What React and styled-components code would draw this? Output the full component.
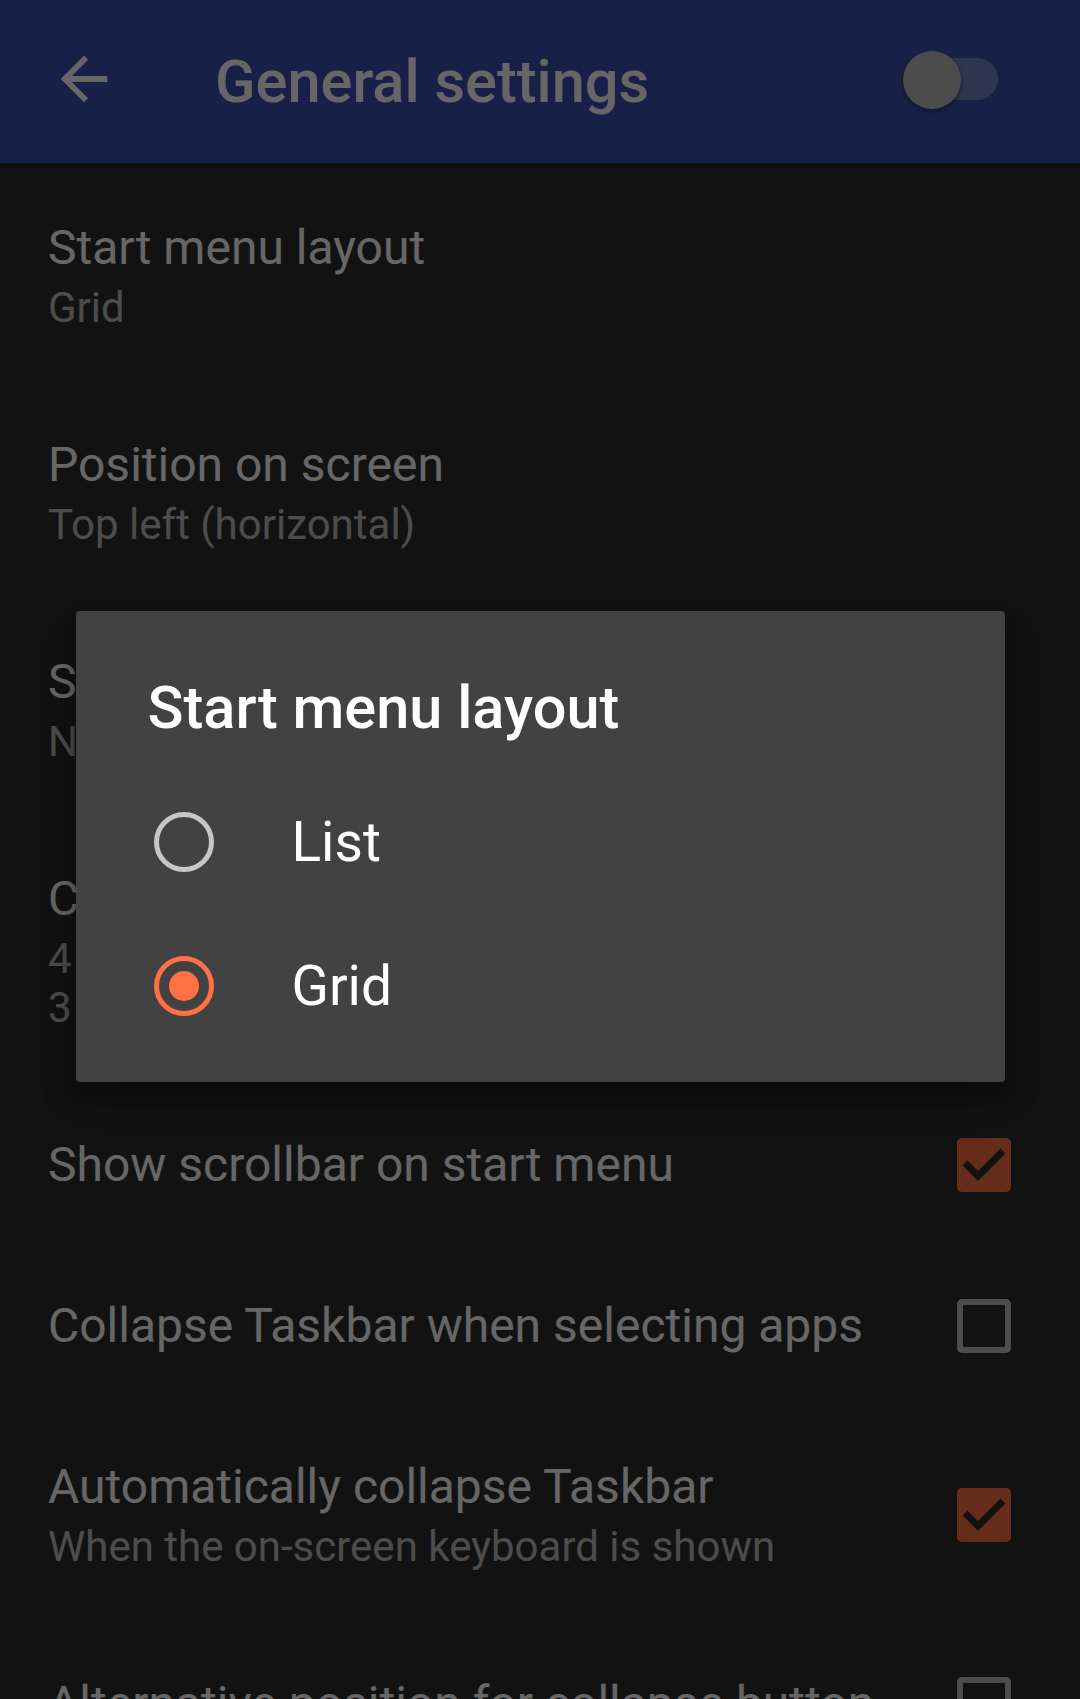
import styled, { createGlobalStyle } from "styled-components";

const GlobalStyle = createGlobalStyle`
  html, body {
    margin: 0;
    padding: 0;
    background: #2f2f2f;
  }
  * {
    box-sizing: border-box;
  }
`;

const Screen = styled.div`
  position: relative;
  height: 100vh;
  overflow: hidden;
  background-color: #2f2f2f;
  font-family: Roboto, "Noto Sans", sans-serif;
  color: #ffffff;
`;

const AppBar = styled.header`
  display: flex;
  align-items: center;
  height: 163px;
  padding: 0 82px 5px 49px;
  background-color: #3f51b5;
  box-shadow: 0 3px 6px rgba(0, 0, 0, 0.25);
`;

const BackButton = styled.div`
  display: flex;
  width: 70px;
  height: 70px;
  color: #ffffff;
`;

const BarTitle = styled.h1`
  flex: 1;
  margin: 0 0 0 96px;
  padding-top: 5px;
  font-size: 59.5px;
  line-height: 70px;
  font-weight: 500;
`;

const Switch = styled.div`
  position: relative;
  display: flex;
  align-items: center;
  justify-content: flex-end;
  width: 95px;
  height: 60px;
`;

const Track = styled.div`
  width: 86px;
  height: 42px;
  border-radius: 21px;
  background-color: rgba(255, 255, 255, 0.3);
`;

const Thumb = styled.div`
  position: absolute;
  left: 0;
  top: 2px;
  width: 58px;
  height: 58px;
  border-radius: 50%;
  background-color: #bdbdbd;
  box-shadow: 0 2px 4px rgba(0, 0, 0, 0.4);
`;

const PrefList = styled.div`
  display: flex;
  flex-direction: column;
`;

const Row = styled.div`
  display: flex;
  align-items: center;
  padding: 57px 69px 48px 48px;
`;

const TextCol = styled.div`
  flex: 1;
  min-width: 0;
`;

const Title = styled.div`
  font-size: 48px;
  line-height: 56px;
  color: #ffffff;
  white-space: nowrap;
`;

const Summary = styled.div`
  margin-top: 7px;
  font-size: 42px;
  line-height: 49px;
  color: rgba(255, 255, 255, 0.7);
`;

const CheckBox = styled.div`
  flex: none;
  display: flex;
  align-items: center;
  justify-content: center;
  width: 54px;
  height: 54px;
  border-radius: 5px;
  margin-left: 30px;
  background-color: ${(p) => (p.checked ? "#ff7043" : "transparent")};
  border: ${(p) => (p.checked ? "none" : "6px solid rgba(255, 255, 255, 0.7)")};
`;

const Scrim = styled.div`
  position: absolute;
  inset: 0;
  display: flex;
  align-items: center;
  justify-content: center;
  padding-bottom: 6px;
  background-color: rgba(0, 0, 0, 0.6);
`;

const Dialog = styled.div`
  width: 929px;
  padding: 63px 0 24px;
  border-radius: 4px;
  background-color: #424242;
  box-shadow: 0 24px 38px rgba(0, 0, 0, 0.14), 0 9px 46px rgba(0, 0, 0, 0.12),
    0 11px 15px rgba(0, 0, 0, 0.2);
`;

const DialogTitle = styled.h2`
  margin: 0 0 28px;
  padding: 0 72px;
  font-size: 59.5px;
  line-height: 68px;
  font-weight: 500;
  color: #ffffff;
`;

const Option = styled.div`
  display: flex;
  align-items: center;
  height: 144px;
  padding-left: 78px;
`;

const Radio = styled.div`
  display: flex;
  align-items: center;
  justify-content: center;
  width: 60px;
  height: 60px;
  border-radius: 50%;
  border: 5.5px solid ${(p) => (p.selected ? "#ff7043" : "#c6c6c6")};

  &::after {
    content: "";
    display: ${(p) => (p.selected ? "block" : "none")};
    width: 30px;
    height: 30px;
    border-radius: 50%;
    background-color: #ff7043;
  }
`;

const OptionLabel = styled.span`
  margin-left: 78px;
  font-size: 55px;
  color: #ffffff;
`;

const prefs = [
  { title: "Start menu layout", summary: ["Grid"] },
  { title: "Position on screen", summary: ["Top left (horizontal)"] },
  { title: "Start menu size", summary: ["Normal"] },
  { title: "Columns and rows", summary: ["4 columns", "3 rows"] },
  { title: "Show scrollbar on start menu", check: true },
  { title: "Collapse Taskbar when selecting apps", check: false },
  {
    title: "Automatically collapse Taskbar",
    summary: ["When the on-screen keyboard is shown"],
    check: true,
  },
  { title: "Alternative position for collapse button", check: false },
];

function ArrowBack() {
  return (
    <svg viewBox="0 0 24 24" width="70" height="70" fill="currentColor">
      <path d="M20 11H7.83l5.59-5.59L12 4l-8 8 8 8 1.41-1.41L7.83 13H20v-2z" />
    </svg>
  );
}

function Check() {
  return (
    <svg width="54" height="54" viewBox="0 0 54 54">
      <path
        d="M8 25 L21 38 L46 13"
        fill="none"
        stroke="#2f2f2f"
        strokeWidth="7"
      />
    </svg>
  );
}

export default function App() {
  return (
    <>
      <GlobalStyle />
      <Screen>
        <AppBar>
          <BackButton>
            <ArrowBack />
          </BackButton>
          <BarTitle>General settings</BarTitle>
          <Switch>
            <Track />
            <Thumb />
          </Switch>
        </AppBar>

        <PrefList>
          {prefs.map((p) => (
            <Row key={p.title}>
              <TextCol>
                <Title>{p.title}</Title>
                {p.summary && (
                  <Summary>
                    {p.summary.map((line) => (
                      <div key={line}>{line}</div>
                    ))}
                  </Summary>
                )}
              </TextCol>
              {p.check !== undefined && (
                <CheckBox checked={p.check}>{p.check && <Check />}</CheckBox>
              )}
            </Row>
          ))}
        </PrefList>

        <Scrim>
          <Dialog>
            <DialogTitle>Start menu layout</DialogTitle>
            <Option>
              <Radio />
              <OptionLabel>List</OptionLabel>
            </Option>
            <Option>
              <Radio selected />
              <OptionLabel>Grid</OptionLabel>
            </Option>
          </Dialog>
        </Scrim>
      </Screen>
    </>
  );
}
